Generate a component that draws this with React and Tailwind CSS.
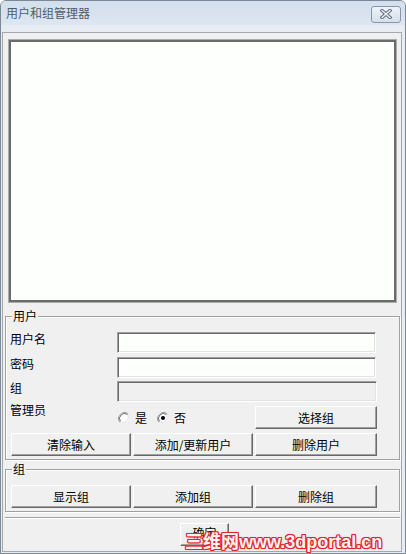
import React from "react";

const sunken =
  "border border-t-[#a0a0a0] border-l-[#a0a0a0] border-r-white border-b-white shadow-[inset_1px_1px_0_#696969,inset_-1px_-1px_0_#e3e3e3]";
const raised =
  "border border-t-white border-l-white border-r-[#696969] border-b-[#696969] shadow-[inset_-1px_-1px_0_#a0a0a0] bg-[#f0f0f0] flex items-center justify-center leading-none";
const groupBox =
  "relative border border-[#a0a0a0] shadow-[inset_1px_1px_0_#fff,1px_1px_0_#fff]";

function Btn({ children, w = "w-[120px]" }) {
  return <div className={`${raised} ${w} h-[23px] shrink-0`}>{children}</div>;
}

function Radio({ checked }) {
  return (
    <svg width="12" height="12" viewBox="0 0 12 12" className="shrink-0">
      <path d="M10.2 1.8 A6 6 0 0 0 1.8 10.2" stroke="#a0a0a0" strokeWidth="1" fill="none" />
      <circle cx="6" cy="6" r="5" fill="#fff" stroke="none" />
      <path d="M9.5 2.5 A5 5 0 0 0 2.5 9.5" stroke="#696969" strokeWidth="1" fill="none" />
      <path d="M2.5 9.5 A5 5 0 0 0 9.5 2.5" stroke="#e3e3e3" strokeWidth="1" fill="none" />
      {checked && <circle cx="6" cy="6" r="2" fill="#000" />}
    </svg>
  );
}

function Row({ label, children, mt }) {
  return (
    <div className={`flex items-start ${mt}`}>
      <div className="w-[111px] pl-[4px] leading-[14px] shrink-0">{label}</div>
      {children}
    </div>
  );
}

export default function App() {
  return (
    <div className="relative w-[406px] h-[554px] bg-[#e8edf4] border border-[#7d8896] rounded-t-[6px] flex flex-col overflow-hidden font-['Noto_Sans_CJK_SC',sans-serif] text-[12px] text-black">
      {/* title bar */}
      <div className="h-[24px] shrink-0 bg-gradient-to-b from-[#d3dfed] to-[#dde6f1] flex items-center justify-between pl-[5px] pr-[4px]">
        <span className="text-[#4f5b68] text-[12px] leading-none">用户和组管理器</span>
        <div className="w-[30px] h-[17px] mt-[2px] rounded-[3px] border border-[#8795a8] bg-gradient-to-b from-[#eef3f8] to-[#d5dfeb] flex items-center justify-center">
          <svg width="12" height="10" viewBox="0 0 12 10">
            <path d="M2 1.5 L10 8.5 M10 1.5 L2 8.5" stroke="#5d6b7c" strokeWidth="3.4" strokeLinecap="square" />
            <path d="M2 1.5 L10 8.5 M10 1.5 L2 8.5" stroke="#f4f6f9" strokeWidth="1.4" strokeLinecap="square" />
          </svg>
        </div>
      </div>

      {/* client */}
      <div className="flex-1 pl-[1px] pr-[3px] pt-[7px] pb-[1px]">
        <div className="h-full border border-[#a3a8ae] bg-[#f0f0f1] flex flex-col">
          {/* list box */}
          <div className="ml-[5px] mt-[6px] w-[389px] h-[264px] border border-[#acacac]">
            <div className="h-full border-2 border-[#6b6b6b] bg-[#fdfffd]" />
          </div>

          {/* 用户 group */}
          <div className={`${groupBox} ml-[2px] mt-[13px] w-[395px] pb-[3px]`}>
            <div className="absolute left-[6px] top-[-8px] px-[1px] bg-[#f0f0f1] leading-[14px]">用户</div>
            <Row label="用户名" mt="mt-[15px]">
              <div className={`${sunken} w-[259px] h-[21px] bg-[#fdfffd]`} />
            </Row>
            <Row label="密码" mt="mt-[4px]">
              <div className={`${sunken} w-[259px] h-[21px] bg-[#fdfffd]`} />
            </Row>
            <Row label="组" mt="mt-[3px]">
              <div className={`${sunken} w-[260px] h-[21px] bg-[#f0f0f0]`} />
            </Row>
            <div className="flex items-center mt-[4px] h-[23px]">
              <div className="w-[111px] pl-[4px] leading-[14px] shrink-0 self-start -mt-[3px]">管理员</div>
              <div className="flex items-center ml-[1px] w-[137px]">
                <Radio />
                <span className="ml-[5px] leading-none">是</span>
                <div className="ml-[10px]">
                  <Radio checked />
                </div>
                <span className="ml-[5px] leading-none">否</span>
              </div>
              <Btn w="w-[122px]">选择组</Btn>
            </div>
            <div className="flex gap-[2px] ml-[5px] mt-[4px]">
              <Btn>清除输入</Btn>
              <Btn>添加/更新用户</Btn>
              <Btn w="w-[122px]">删除用户</Btn>
            </div>
          </div>

          {/* 组 group */}
          <div className={`${groupBox} ml-[2px] mt-[9px] w-[395px] pb-[3px]`}>
            <div className="absolute left-[6px] top-[-8px] px-[1px] bg-[#f0f0f1] leading-[14px]">组</div>
            <div className="flex gap-[2px] ml-[5px] mt-[15px]">
              <Btn>显示组</Btn>
              <Btn>添加组</Btn>
              <Btn w="w-[122px]">删除组</Btn>
            </div>
          </div>

          {/* separator */}
          <div className="ml-[2px] mt-[5px] w-[395px] h-[2px] border-t border-[#a0a0a0] border-b border-b-white" />

          <div className="ml-[177px] mt-[4px]">
            <Btn w="w-[49px]">
              <span className="-mt-[4px]">确定</span>
            </Btn>
          </div>
        </div>
      </div>

      {/* watermark */}
      <div className="absolute left-[184px] top-[532px] leading-[18px] text-[18px] font-bold font-['Liberation_Sans','Noto_Sans_CJK_SC',sans-serif] text-[#fff2f2] [text-shadow:1px_0_#e3242b,-1px_0_#e3242b,0_1px_#e3242b,0_-1px_#e3242b,1px_1px_#e3242b,-1px_-1px_#e3242b,1px_-1px_#e3242b,-1px_1px_#e3242b,0_0_3px_#f39a9a] whitespace-nowrap">
        三维网www.3dportal.cn
      </div>
    </div>
  );
}
